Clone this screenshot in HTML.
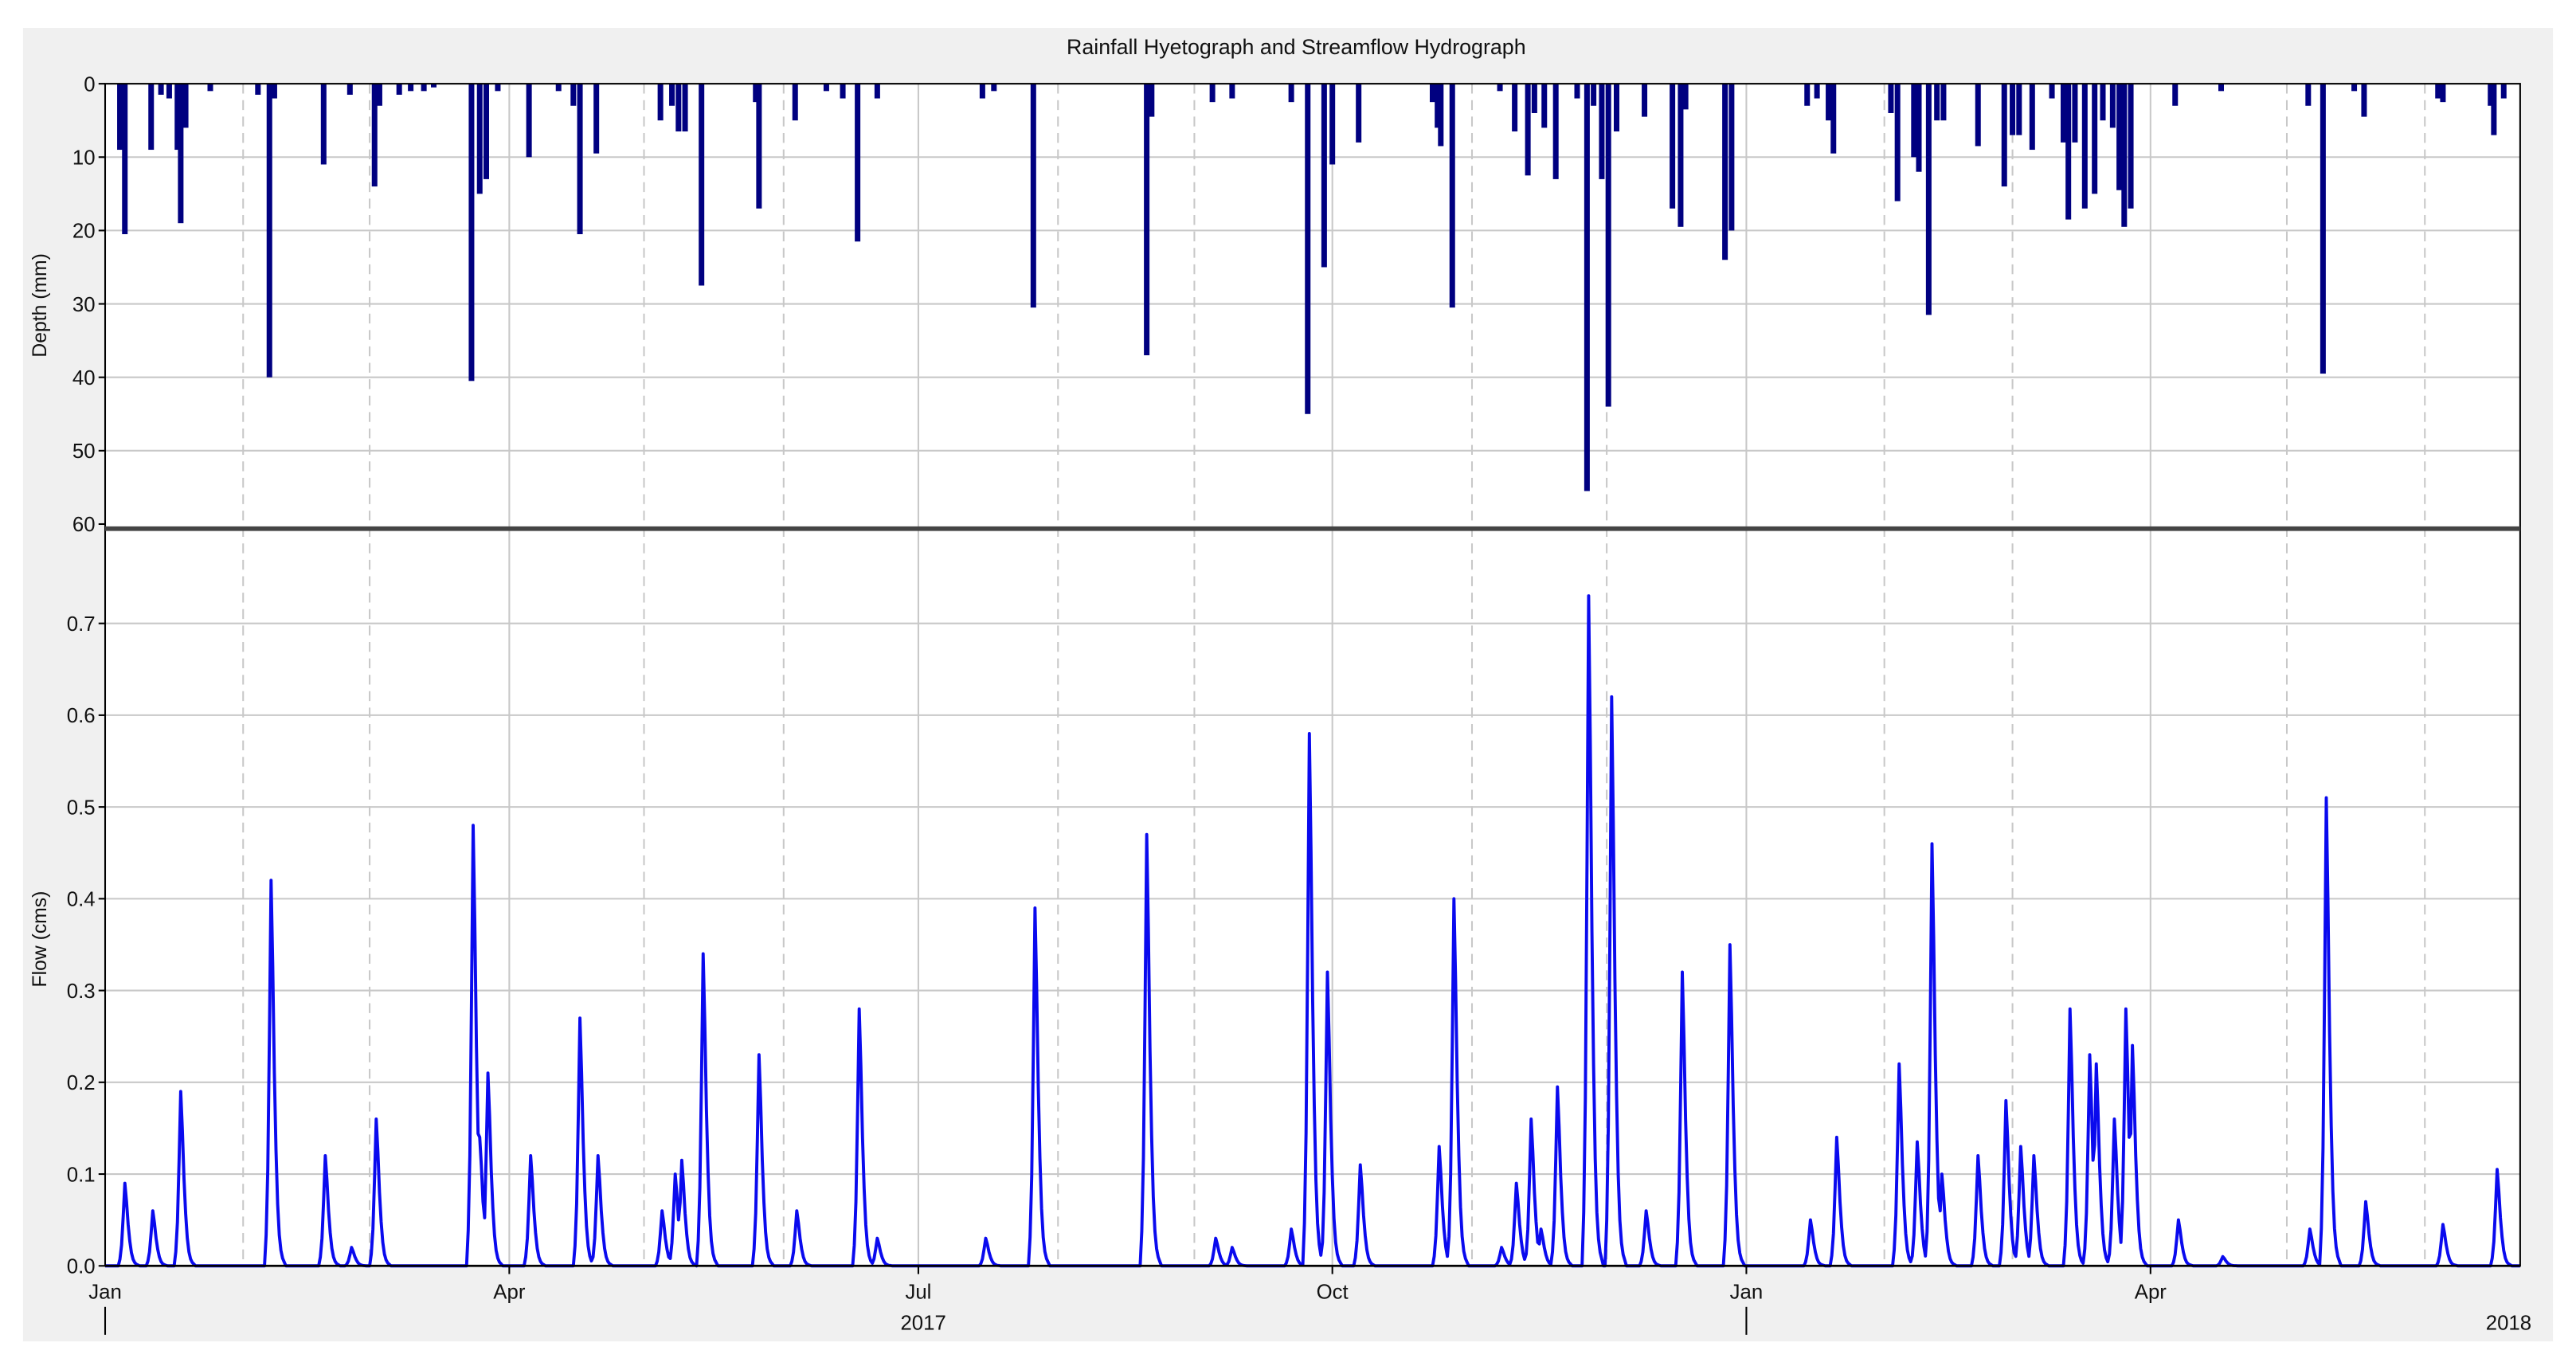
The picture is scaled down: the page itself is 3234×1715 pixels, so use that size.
<!DOCTYPE html>
<html><head><meta charset="utf-8">
<style>
html,body{margin:0;padding:0;background:#fff;}
svg{display:block;}
text{font-family:"Liberation Sans",sans-serif;fill:#111;}
</style></head>
<body>
<svg id="s" width="3234" height="1715" viewBox="0 0 1568 832" preserveAspectRatio="none" xmlns="http://www.w3.org/2000/svg">
<rect x="14" y="17" width="1540" height="800" fill="#f0f0f0"/>
<rect x="64" y="51" width="1470" height="271" fill="#fff"/>
<rect x="64" y="322" width="1470" height="449" fill="#fff"/>
<g id="grid"></g>
<g id="bars" fill="#000080"></g>
<path id="flow" fill="none" stroke="#0a0aee" stroke-width="1.9" stroke-linejoin="round"/>
<rect x="64" y="51" width="1470" height="720" fill="none" stroke="#000" stroke-width="1"/>
<line x1="64" y1="322" x2="1534" y2="322" stroke="#444" stroke-width="2.8"/>
<line x1="64" y1="771" x2="1534" y2="771" stroke="#000" stroke-width="1.3"/>
<text x="789" y="33" font-size="13" text-anchor="middle">Rainfall Hyetograph and Streamflow Hydrograph</text>
<text transform="translate(28,186) rotate(-90)" font-size="12" text-anchor="middle">Depth (mm)</text>
<text transform="translate(28,572) rotate(-90)" font-size="12" text-anchor="middle">Flow (cms)</text>
<g id="labels" font-size="12.5"></g>
<g font-size="12.5">
<text x="64" y="791" text-anchor="middle">Jan</text>
<text x="310" y="791" text-anchor="middle">Apr</text>
<text x="559" y="791" text-anchor="middle">Jul</text>
<text x="811" y="791" text-anchor="middle">Oct</text>
<text x="1063" y="791" text-anchor="middle">Jan</text>
<text x="1309" y="791" text-anchor="middle">Apr</text>
<text x="562" y="810" text-anchor="middle">2017</text>
<text x="1527" y="810" text-anchor="middle">2018</text>
</g>
<line x1="64" y1="796" x2="64" y2="813" stroke="#000"/>
<line x1="1063" y1="796" x2="1063" y2="813" stroke="#000"/>
</svg>
<script>
var NS="http://www.w3.org/2000/svg";
function el(p,t,a){var e=document.createElementNS(NS,t);for(var k in a)e.setAttribute(k,a[k]);p.appendChild(e);return e;}
var g=document.getElementById('grid'),lb=document.getElementById('labels');
for(var d=10;d<=50;d+=10){var y=51+d*4.47;el(g,'line',{x1:64,x2:1534,y1:y,y2:y,stroke:'#c8c8c8','stroke-width':1});}
for(var d=0;d<=60;d+=10){var y=51+d*4.47;var t=el(lb,'text',{x:58,y:y+4.5,'text-anchor':'end'});t.textContent=d;el(lb,'line',{x1:60,x2:64,y1:y,y2:y,stroke:'#000'});}
for(var v=1;v<=7;v++){var y=771-v*55.9;el(g,'line',{x1:64,x2:1534,y1:y,y2:y,stroke:'#c8c8c8','stroke-width':1});}
for(var v=0;v<=7;v++){var y=771-v*55.9;var t=el(lb,'text',{x:58,y:y+4.5,'text-anchor':'end'});t.textContent=(v/10).toFixed(1);el(lb,'line',{x1:60,x2:64,y1:y,y2:y,stroke:'#000'});}
[310,559,811,1063,1309].forEach(function(x){el(g,'line',{x1:x,x2:x,y1:51,y2:771,stroke:'#c8c8c8','stroke-width':1});el(lb,'line',{x1:x,x2:x,y1:771,y2:776,stroke:'#000'});});
[148,225,392,477,644,727,896,978,1147,1225,1392,1476].forEach(function(x){el(g,'line',{x1:x,x2:x,y1:51,y2:771,stroke:'#c8c8c8','stroke-width':1,'stroke-dasharray':'6,4'});});
var rain=[[73,9],[76,20.5],[92,9],[98,1.5],[103,2],[108,9],[110,19],[113,6],[128,1],[157,1.5],[164,40],[167,2],[197,11],[213,1.5],[228,14],[231,3],[243,1.5],[250,1],[258,1],[264,0.5],[287,40.5],[292,15],[296,13],[303,1],[322,10],[340,1],[349,3],[353,20.5],[363,9.5],[402,5],[409,3],[413,6.5],[417,6.5],[427,27.5],[460,2.5],[462,17],[484,5],[503,1],[513,2],[522,21.5],[534,2],[598,2],[605,1],[629,30.5],[698,37],[701,4.5],[738,2.5],[750,2],[786,2.5],[796,45],[806,25],[811,11],[827,8],[872,2.5],[875,6],[877,8.5],[884,30.5],[913,1],[922,6.5],[930,12.5],[934,4],[940,6],[947,13],[960,2],[966,55.5],[970,3],[975,13],[979,44],[984,6.5],[1001,4.5],[1018,17],[1023,19.5],[1026,3.5],[1050,24],[1054,20],[1100,3],[1106,2],[1113,5],[1116,9.5],[1151,4],[1155,16],[1165,10],[1168,12],[1174,31.5],[1179,5],[1183,5],[1204,8.5],[1220,14],[1225,7],[1229,7],[1237,9],[1249,2],[1256,8],[1259,18.5],[1263,8],[1269,17],[1275,15],[1280,5],[1286,6],[1290,14.5],[1293,19.5],[1297,17],[1324,3],[1352,1],[1405,3],[1414,39.5],[1433,1],[1439,4.5],[1484,2],[1487,2.5],[1516,3],[1518,7],[1524,2]];
var b=document.getElementById('bars');
rain.forEach(function(r){el(b,'rect',{x:r[0]-1.7,y:51,width:3.4,height:r[1]*4.47});});
var pk=[[76,0.09],[93,0.06],[110,0.19],[165,0.42],[198,0.12],[214,0.02],[229,0.16],[288,0.48],[292,0.14],[297,0.21],[323,0.12],[353,0.27],[364,0.12],[403,0.06],[411,0.1],[415,0.115],[428,0.34],[462,0.23],[485,0.06],[523,0.28],[534,0.03],[600,0.03],[630,0.39],[698,0.47],[740,0.03],[750,0.02],[786,0.04],[797,0.58],[808,0.32],[828,0.11],[876,0.13],[885,0.40],[914,0.02],[923,0.09],[932,0.16],[938,0.04],[948,0.195],[967,0.73],[981,0.62],[1002,0.06],[1024,0.32],[1053,0.35],[1102,0.05],[1118,0.14],[1156,0.22],[1167,0.135],[1176,0.46],[1182,0.1],[1204,0.12],[1221,0.18],[1230,0.13],[1238,0.12],[1260,0.28],[1272,0.23],[1276,0.22],[1287,0.16],[1294,0.28],[1298,0.24],[1326,0.05],[1353,0.01],[1406,0.04],[1416,0.51],[1440,0.07],[1487,0.045],[1520,0.105]];
var N=1534-64,vals=new Array(N+1).fill(0);
pk.forEach(function(p){var x=Math.round(p[0]-64),v=p[1];
 var shape=[[-3,0.08],[-2,0.25],[-1,0.6],[0,1],[1,0.78],[2,0.5],[3,0.3],[4,0.16],[5,0.08],[6,0.04],[7,0.02],[8,0.01]];
 shape.forEach(function(s){var i=x+s[0];if(i>=0&&i<=N)vals[i]=Math.max(vals[i],v*s[1]);});});
var d='';for(var i=0;i<=N;i++){d+=(i?'L':'M')+(64+i)+' '+(771-vals[i]*559).toFixed(1);}
document.getElementById('flow').setAttribute('d',d);
</script>
</body></html>
